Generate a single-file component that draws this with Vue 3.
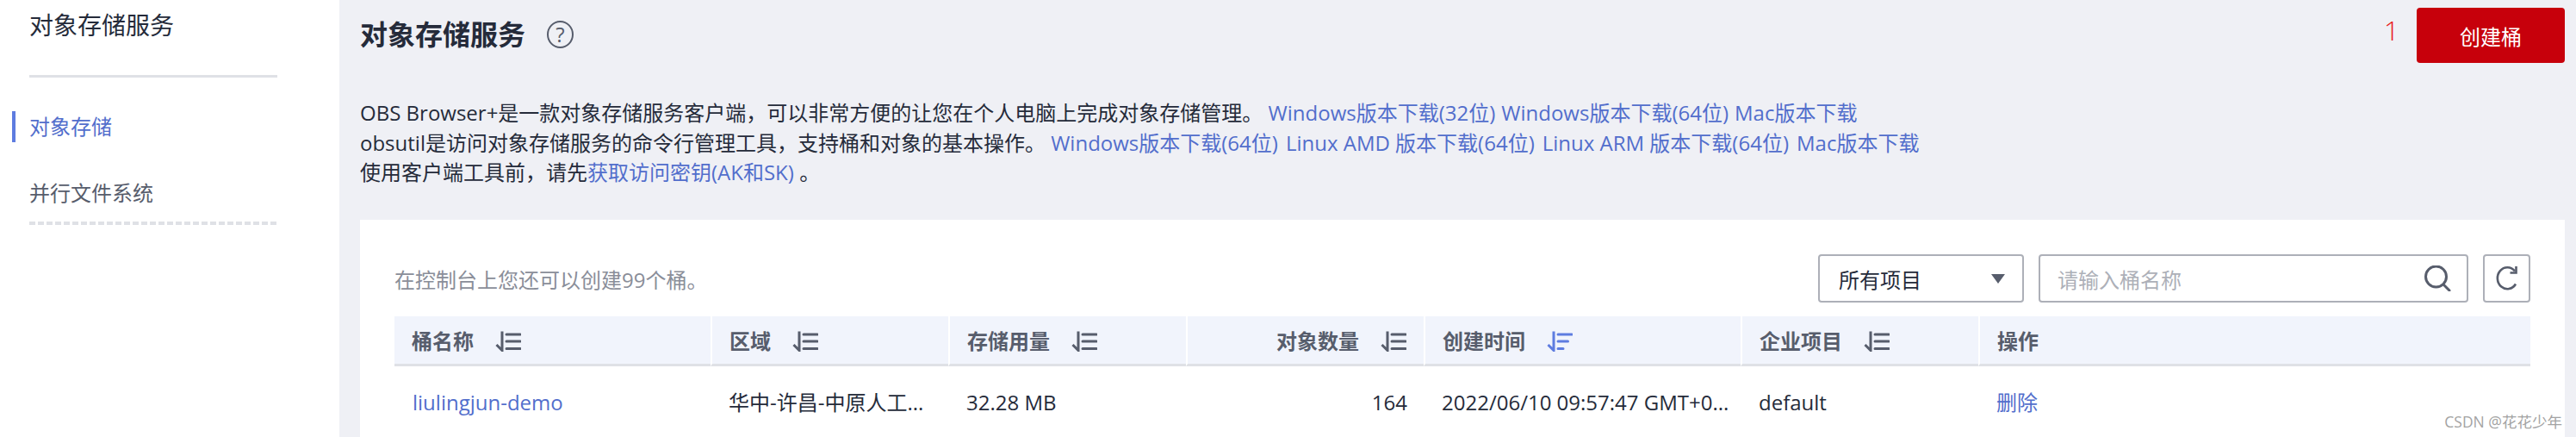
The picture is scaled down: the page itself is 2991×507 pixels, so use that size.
<script setup>
const columns = [
  { key: 'name', label: '桶名称', sort: true },
  { key: 'region', label: '区域', sort: true },
  { key: 'usage', label: '存储用量', sort: true },
  { key: 'count', label: '对象数量', sort: true, right: true },
  { key: 'created', label: '创建时间', sort: true, active: true },
  { key: 'project', label: '企业项目', sort: true },
  { key: 'action', label: '操作' }
]

const bucket = {
  name: 'liulingjun-demo',
  region: '华中-许昌-中原人工...',
  usage: '32.28 MB',
  count: '164',
  created: '2022/06/10 09:57:47 GMT+0...',
  project: 'default',
  action: '删除'
}

const browserLinks = ['Windows版本下载(32位)', 'Windows版本下载(64位)', 'Mac版本下载']
const obsutilLinks = ['Windows版本下载(64位)', 'Linux AMD 版本下载(64位)', 'Linux ARM 版本下载(64位)', 'Mac版本下载']
</script>

<template>
  <div class="page">
    <aside class="sidebar">
      <div class="side-title">对象存储服务</div>
      <nav class="side-nav">
        <a class="nav-item active">对象存储</a>
        <a class="nav-item">并行文件系统</a>
      </nav>
    </aside>

    <main class="content">
      <header class="head">
        <h1>对象存储服务</h1>
        <span class="help">?</span>
        <span class="step">1</span>
        <button class="create">创建桶</button>
      </header>

      <section class="intro">
        <p>
          OBS Browser+是一款对象存储服务客户端，可以非常方便的让您在个人电脑上完成对象存储管理。
          <span class="links"><a v-for="l in browserLinks" :key="l">{{ l }}</a></span>
        </p>
        <p>
          obsutil是访问对象存储服务的命令行管理工具，支持桶和对象的基本操作。
          <span class="links wide"><a v-for="l in obsutilLinks" :key="l">{{ l }}</a></span>
        </p>
        <p>使用客户端工具前，请先<a>获取访问密钥(AK和SK)</a> 。</p>
      </section>

      <section class="card">
        <div class="toolbar">
          <span class="quota">在控制台上您还可以创建99个桶。</span>
          <div class="select">
            <span>所有项目</span>
            <i class="caret"></i>
          </div>
          <div class="search">
            <span class="placeholder">请输入桶名称</span>
            <svg width="34" height="30" viewBox="0 0 34 30" fill="none" stroke="#575d6c" stroke-width="3">
              <circle cx="15.500" cy="13" r="12" />
              <path d="M24 22l7 7" stroke-linecap="round" />
            </svg>
          </div>
          <button class="refresh">
            <svg width="28" height="30" viewBox="0 0 28 30" fill="none" stroke="#575d6c" stroke-width="2.600">
              <path d="M24 21.500A11.500 12.500 0 1 1 23 6.500" />
              <path d="M24.500 1v7.500h-7" />
            </svg>
          </button>
        </div>

        <div class="table">
          <div
            v-for="col in columns"
            :key="col.key"
            class="th"
            :class="{ right: col.right }"
          >
            <span>{{ col.label }}</span>
            <svg v-if="col.sort" class="sort" :class="{ on: col.active }" width="30" height="24" viewBox="0 0 30 24" fill="none" stroke="currentColor" stroke-width="3">
              <path d="M8 0.500V22.500L1.500 16" />
              <path v-if="col.active" d="M13 4H29M13 12H24.500M13 20.500H19" stroke-linecap="round" />
              <path v-else d="M13 4H29M13 12H29M13 20.500H29" stroke-linecap="round" />
            </svg>
          </div>
          <div
            v-for="col in columns"
            :key="'row-' + col.key"
            class="td"
            :class="{ right: col.right, link: col.key === 'name' || col.key === 'action' }"
          >{{ bucket[col.key] }}</div>
        </div>
        <span class="watermark">CSDN @花花少年</span>
      </section>
    </main>
  </div>
</template>

<style>
html, body {
  margin: 0;
  height: 507px;
  overflow: hidden;
}
</style>

<style scoped>
.page {
  display: flex;
  width: 2991px;
  height: 507px;
  overflow: hidden;
  background: #eff0f5;
  color: #252b3a;
  font-family: "Open Sans", "Noto Sans CJK SC", sans-serif;
  font-size: 24px;
}

a {
  color: #526ecc;
  text-decoration: none;
}

.sidebar {
  width: 394px;
  flex-shrink: 0;
  box-sizing: border-box;
  padding: 0 72px 0 34px;
  background: #fff;
}

.side-title {
  height: 90px;
  box-sizing: border-box;
  padding-top: 8px;
  line-height: 42px;
  font-size: 28px;
  border-bottom: 3px solid #dfe1e6;
}

.side-nav {
  padding-top: 39px;
  height: 132px;
  background: repeating-linear-gradient(90deg, #dfe1e6 0 7px, transparent 7px 10px) bottom / 100% 4px no-repeat;
}

.nav-item {
  display: block;
  position: relative;
  height: 36px;
  line-height: 36px;
  margin-bottom: 41px;
  color: #575d6c;
}

.nav-item.active {
  color: #526ecc;
}

.nav-item.active::before {
  content: "";
  position: absolute;
  left: -20px;
  top: 0;
  width: 4px;
  height: 36px;
  background: #5e7ce0;
}

.content {
  flex: 1;
  min-width: 0;
  padding: 9px 13px 0 24px;
}

.head {
  display: flex;
  align-items: center;
  height: 64px;
}

.head h1 {
  margin: 0;
  font-size: 32px;
  font-weight: 700;
  line-height: 64px;
  position: relative;
  top: -1px;
}

.help {
  flex-shrink: 0;
  box-sizing: border-box;
  width: 31px;
  height: 32px;
  margin-left: 25px;
  border: 2.500px solid #575d6c;
  border-radius: 50%;
  text-align: center;
  line-height: 27px;
  font-size: 24px;
  color: #575d6c;
  position: relative;
  top: -1px;
}

.step {
  margin-left: auto;
  margin-right: 20px;
  margin-bottom: 12px;
  color: #e81c1c;
  font-size: 32px;
  line-height: 52px;
  font-weight: 300;
}

.create {
  width: 172px;
  height: 64px;
  padding: 0;
  border: 0;
  border-radius: 4px;
  background: #c7000b;
  color: #fff;
  font: inherit;
}

.intro {
  padding-top: 41px;
  height: 141px;
}

.intro p {
  margin: 0;
  height: 34.500px;
  line-height: 34.500px;
  white-space: nowrap;
}

.links a {
  margin-right: 7px;
}

.links.wide a {
  margin-right: 9px;
}

.card {
  position: relative;
  height: 252px;
  padding: 40px 40px 0;
  background: #fff;
}

.toolbar {
  display: flex;
  align-items: center;
  height: 56px;
  margin-bottom: 16px;
}

.quota {
  margin-right: auto;
  color: #8a8e99;
}

.select,
.search,
.refresh {
  display: flex;
  align-items: center;
  box-sizing: border-box;
  height: 56px;
  background: #fff;
  border: 2px solid #adb0b8;
  border-radius: 4px;
}

.select {
  width: 239px;
  padding: 0 20px 0 22px;
  justify-content: space-between;
}

.caret {
  width: 0;
  height: 0;
  border-left: 8px solid transparent;
  border-right: 8px solid transparent;
  border-top: 11px solid #575d6c;
}

.search {
  width: 499px;
  margin-left: 17px;
  padding: 0 17px 0 20px;
  justify-content: space-between;
}

.placeholder {
  color: #adb0b8;
}

.refresh {
  width: 55px;
  margin-left: 17px;
  padding: 0;
  justify-content: center;
}

.table {
  display: grid;
  grid-template-columns: 367px 276px 276px 276px 368px 276px 1fr;
}

.th {
  display: flex;
  align-items: center;
  gap: 25px;
  box-sizing: border-box;
  height: 58px;
  padding: 0 20px;
  background: #f1f4fc;
  border-left: 2px solid #fff;
  border-bottom: 3px solid #dfe1e6;
  font-weight: 700;
  color: #575d6c;
}

.th:first-child {
  border-left: 0;
}

.th.right {
  justify-content: flex-end;
}

.sort {
  flex-shrink: 0;
  margin-top: 2px;
  color: #575d6c;
}

.sort.on {
  color: #5e7ce0;
}

.td {
  box-sizing: border-box;
  height: 84px;
  padding: 0 0 0 21px;
  line-height: 84px;
  white-space: nowrap;
}

.td.right {
  text-align: right;
  padding-right: 19px;
}

.td.link {
  color: #526ecc;
}

.watermark {
  position: absolute;
  right: 3px;
  top: 222px;
  color: #a3a3a3;
  font-size: 17.500px;
  line-height: 24px;
}
</style>
